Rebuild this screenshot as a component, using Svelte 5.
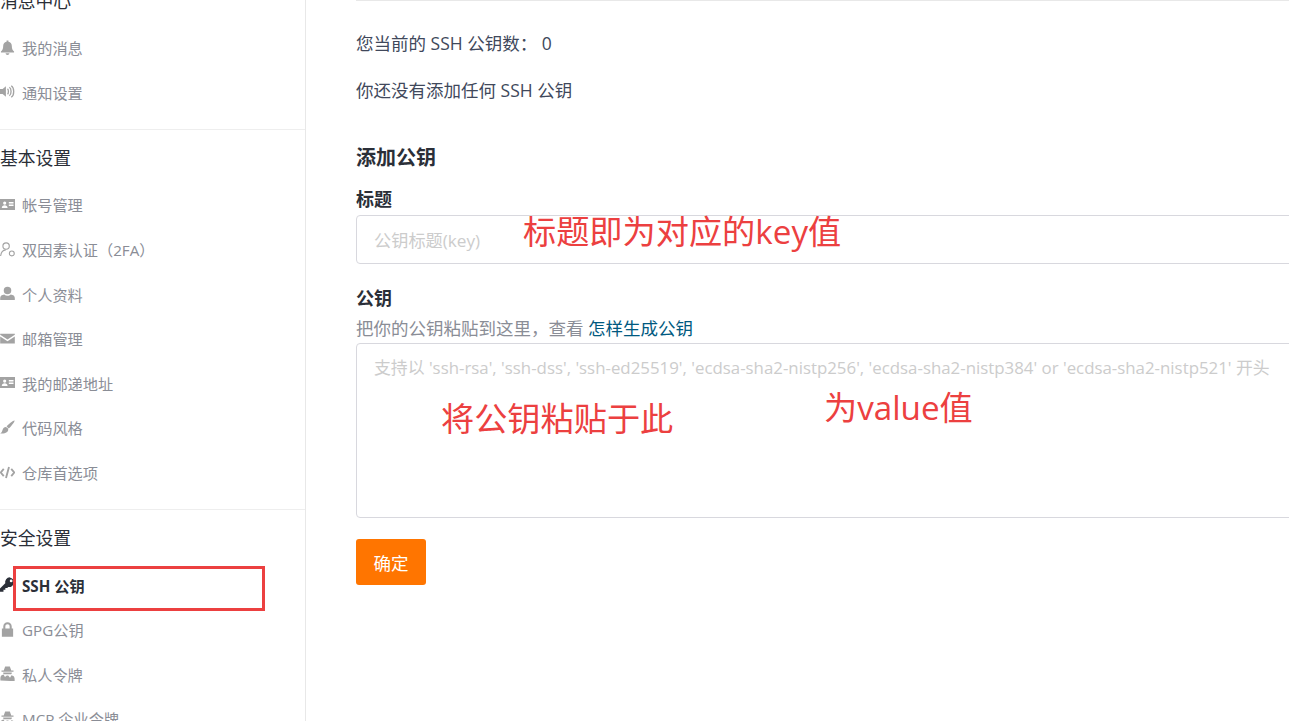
<script>
  const groups = [
    {
      title: "消息中心",
      items: [
        { icon: "bell", label: "我的消息" },
        { icon: "volume", label: "通知设置" }
      ]
    },
    {
      title: "基本设置",
      items: [
        { icon: "card", label: "帐号管理" },
        { icon: "twofa", label: "双因素认证（2FA）" },
        { icon: "user", label: "个人资料" },
        { icon: "mail", label: "邮箱管理" },
        { icon: "card", label: "我的邮递地址" },
        { icon: "brush", label: "代码风格" },
        { icon: "code", label: "仓库首选项" }
      ]
    },
    {
      title: "安全设置",
      items: [
        { icon: "key", label: "SSH 公钥", active: true },
        { icon: "lock", label: "GPG公钥" },
        { icon: "secret", label: "私人令牌" },
        { icon: "secret", label: "MCP 企业令牌" }
      ]
    }
  ];

  const hint =
    "支持以 'ssh-rsa', 'ssh-dss', 'ssh-ed25519', 'ecdsa-sha2-nistp256', 'ecdsa-sha2-nistp384' or 'ecdsa-sha2-nistp521' 开头";
</script>

<div class="page">
  <aside class="sidebar">
    {#each groups as group, i}
      <section class="group" class:first={i === 0}>
        <h3>{group.title}</h3>
        <ul>
          {#each group.items as item}
            <li class:active={item.active}>
              <svg class="icon" viewBox="0 0 16 16" fill="currentColor">
                {#if item.icon === "bell"}
                  <path d="M7 .6h2v1.300c2.400.5 3.600 2.300 3.600 4.600 0 3 .7 4.300 2.400 5.800v1H1v-1c1.700-1.500 2.400-2.800 2.400-5.800C3.400 4.200 4.600 2.400 7 1.900zM6 14.200h4c0 1-.9 1.700-2 1.700s-2-.7-2-1.700z" />
                {:else if item.icon === "volume"}
                  <path d="M0 5.300h2.800L6.300 2.300v11.400l-3.500-3H0z" />
                  <path d="M8 5.200c1.300.8 1.300 4.800 0 5.600M10 3.500c2.400 1.500 2.400 7.500 0 9M12 1.800c3.500 2.200 3.500 10.200 0 12.400" fill="none" stroke="currentColor" stroke-width="1.400" />
                {:else if item.icon === "card"}
                  <path fill-rule="evenodd" d="M0 2.200h16v11.600H0zM5 4.800a1.700 1.700 0 1 0 0 3.400 1.700 1.700 0 0 0 0-3.400zM1.900 11.700h6.200c0-1.900-1.300-2.800-3.100-2.800s-3.100.9-3.100 2.800zM9.400 5.300v1.500h5V5.300zM9.400 8v1.500h5V8z" />
                {:else if item.icon === "twofa"}
                  <g fill="none" stroke="currentColor" stroke-width="1.200">
                    <circle cx="6.500" cy="4.300" r="3.400" />
                    <path d="M.7 15c.3-3.700 2.400-6.300 5.500-6.600" />
                    <circle cx="12.600" cy="12.200" r="2.600" />
                  </g>
                {:else if item.icon === "user"}
                  <circle cx="8" cy="4.700" r="4" />
                  <path d="M.2 15v-2.200c0-2.200 1.700-3.500 4.300-3.800 1 .9 2.200 1.300 3.500 1.300s2.500-.4 3.500-1.300c2.600.3 4.300 1.600 4.300 3.800V15z" />
                {:else if item.icon === "mail"}
                  <path d="M.2 2.800h15.600v1.100L8 9 .2 3.900zM.2 5.800 8 10.900l7.800-5.100V13.400H.2z" />
                {:else if item.icon === "brush"}
                  <path d="M15.500.5c.6.6-3.500 6.300-6.200 8.500L7 6.700C9.300 4 14.900-.1 15.500.5zM6.400 7.600c1.400.1 2.300 1.100 2.400 2.400 0 2.500-2.500 4.800-8.600 4.300 1.800-.8 1.900-2 2.500-3.700.6-1.700 2-3.100 3.700-3z" />
                {:else if item.icon === "code"}
                  <path d="M4 4.200.8 8 4 11.800M12 4.200 15.200 8 12 11.800M9.600 2.200 6.400 13.800" fill="none" stroke="currentColor" stroke-width="2" />
                {:else if item.icon === "key"}
                  <path fill-rule="evenodd" d="M10.500.4a5 5 0 0 0-4.900 6.200L0 12.200v3.500h3.700v-2h2v-2h2l1.100-1a5 5 0 1 0 1.700-10.300zM11.900 2.700a1.500 1.500 0 1 1 0 3 1.500 1.500 0 0 1 0-3z" />
                {:else if item.icon === "lock"}
                  <path fill-rule="evenodd" d="M8 .3c-2.600 0-4.500 1.900-4.500 4.500v2H2v8.900h12V6.800h-1.500v-2C12.500 2.200 10.600.3 8 .3zM8 2.500c1.400 0 2.300 1 2.300 2.300v2H5.700v-2C5.700 3.500 6.600 2.500 8 2.500z" />
                {:else if item.icon === "secret"}
                  <path fill-rule="evenodd" d="M5.500.6h5L12 4.800h2.400v1.300H1.600V4.800H4zM3.400 6.900h9.200c.1 1.100-.2 1.600-.8 2H4.200c-.6-.4-.9-.9-.8-2zM.4 15.500v-2.700c0-2.100 1.400-3.400 3.400-3.700l1.500 2.700L7.200 10h1.600l1.900 2.500 1.500-2.700c2 .3 3.400 1.600 3.400 3.700v2.700z" />
                {/if}
              </svg>
              <span>{item.label}</span>
            </li>
          {/each}
        </ul>
      </section>
    {/each}
    <div class="red-box"></div>
  </aside>

  <main class="content">
    <p class="count">您当前的 SSH 公钥数： <b>0</b></p>
    <p class="empty">你还没有添加任何 SSH 公钥</p>

    <h2>添加公钥</h2>

    <label class="field-label" for="key-title">标题</label>
    <div class="field">
      <input id="key-title" type="text" placeholder="公钥标题(key)" />
      <span class="note note-key">标题即为对应的key值</span>
    </div>

    <label class="field-label second" for="key-body">公钥</label>
    <p class="help">把你的公钥粘贴到这里，查看 <a href="#top">怎样生成公钥</a></p>
    <div class="field">
      <textarea id="key-body" placeholder={hint}></textarea>
      <span class="note note-paste">将公钥粘贴于此</span>
      <span class="note note-value">为value值</span>
    </div>

    <button type="button">确定</button>
  </main>
</div>

<style>
  :global(body) {
    margin: 0;
    background: #fff;
  }

  .page {
    display: flex;
    width: 1289px;
    height: 721px;
    overflow: hidden;
    font-family: "Open Sans", "Noto Sans CJK SC", sans-serif;
    color: #303643;
  }

  .sidebar {
    position: relative;
    flex: none;
    width: 305px;
    height: 760px;
    margin-top: -20px;
    border-right: 1px solid #e8e8e8;
    box-sizing: content-box;
  }

  .group {
    padding: 18px 0 15px;
    border-bottom: 1px solid #eeeeee;
  }

  .group.first {
    padding-top: 11px;
  }

  .group:last-of-type {
    border-bottom: 0;
  }

  h3 {
    margin: 0 0 14px;
    font-size: 17.8px;
    line-height: 20px;
    font-weight: 400;
    color: #2b2f38;
  }

  ul {
    margin: 0;
    padding: 0;
    list-style: none;
  }

  li {
    display: flex;
    align-items: center;
    gap: 7px;
    height: 44.6px;
    font-size: 15.2px;
    color: #8a8d96;
  }

  li .icon {
    flex: none;
    width: 15px;
    height: 15px;
    color: #a3a3a3;
  }

  li.active {
    font-weight: 700;
    color: #2b2f38;
  }

  li.active .icon {
    color: #2b2f38;
  }

  .red-box {
    position: absolute;
    left: 13px;
    top: 586px;
    width: 252px;
    height: 45px;
    box-sizing: border-box;
    border: 3px solid #ec4040;
  }

  .content {
    flex: none;
    width: 984px;
    margin-left: 50px;
    border-top: 1px solid #e8e8e8;
    height: 720px;
  }

  p {
    margin: 0;
  }

  .count,
  .empty {
    font-size: 17.5px;
    line-height: 24px;
    color: #40485b;
  }

  .count {
    margin-top: 30px;
  }

  .count b {
    font-weight: 400;
  }

  .empty {
    margin-top: 23px;
  }

  h2 {
    margin: 42px 0 0;
    font-size: 20px;
    line-height: 28px;
    font-weight: 700;
    color: #2b2f38;
  }

  .field-label {
    display: block;
    margin-top: 15px;
    font-size: 18px;
    line-height: 24px;
    font-weight: 700;
    color: #2b2f38;
  }

  .field-label.second {
    margin-top: 22px;
  }

  .help {
    margin-top: 6px;
    margin-bottom: 3px;
    font-size: 17.5px;
    line-height: 24px;
    color: #8a8d96;
  }

  .help a {
    color: #005980;
    text-decoration: none;
  }

  .field {
    position: relative;
  }

  input,
  textarea {
    display: block;
    width: 100%;
    box-sizing: border-box;
    padding: 0 17px;
    border: 1px solid #d8d8de;
    border-radius: 4px;
    outline: 0;
    font-family: inherit;
    background: #fff;
    color: #303643;
    resize: none;
  }

  input {
    height: 49px;
    margin-top: 4px;
    padding-top: 1px;
    font-size: 17.2px;
  }

  textarea {
    height: 175px;
    padding-top: 12px;
    font-size: 16.85px;
    line-height: 24px;
  }

  input::placeholder,
  textarea::placeholder {
    color: #cccccc;
    opacity: 1;
  }

  .note {
    position: absolute;
    color: #ec4040;
    font-size: 33.2px;
    line-height: 40px;
    white-space: nowrap;
  }

  .note-key {
    left: 167px;
    top: -3px;
  }

  .note-paste {
    left: 85px;
    top: 56px;
  }

  .note-value {
    left: 468px;
    top: 45px;
  }

  button {
    display: block;
    width: 70px;
    height: 46px;
    margin-top: 21px;
    border: 0;
    border-radius: 3px;
    background: #ff7500;
    color: #fff;
    font-family: inherit;
    font-size: 17.5px;
  }
</style>
